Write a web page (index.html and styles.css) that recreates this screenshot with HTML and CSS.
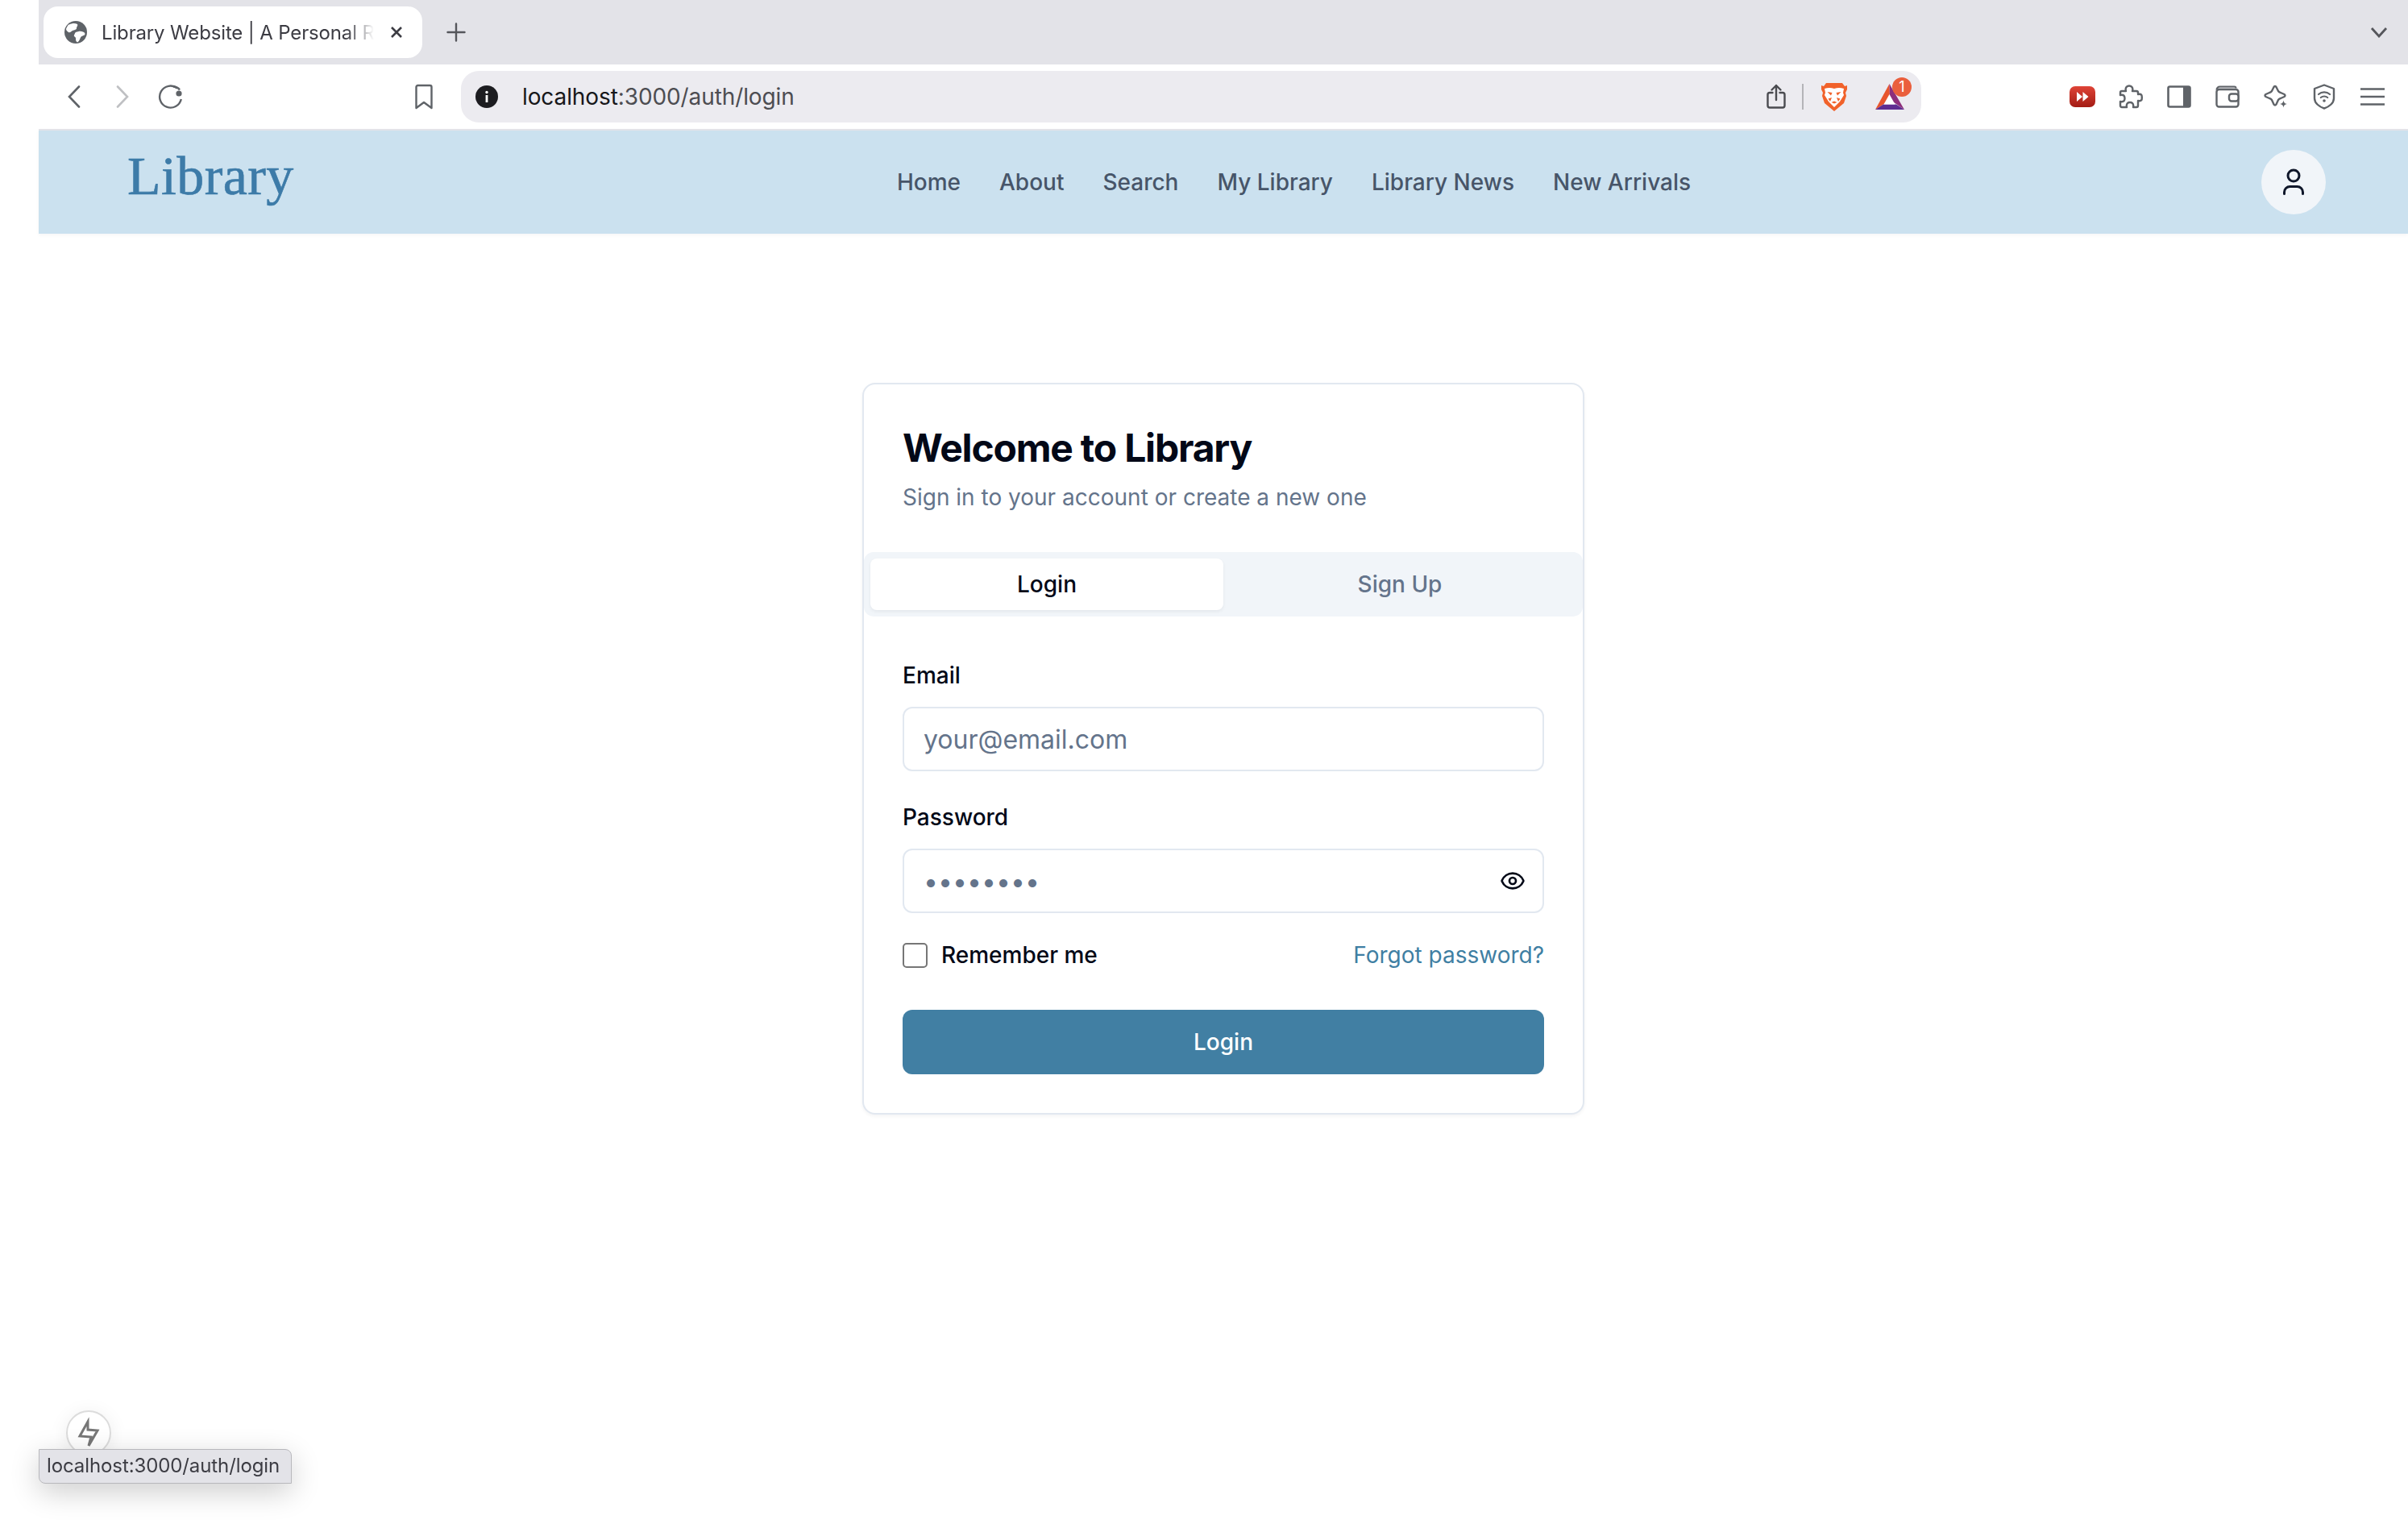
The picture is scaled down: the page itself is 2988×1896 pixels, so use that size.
FILE: index.html
```html
<!DOCTYPE html>
<html lang="en">
<head>
<meta charset="utf-8">
<title>Library Website | A Personal Reading Hub</title>
<link rel="stylesheet" href="styles.css">
</head>
<body>
<div class="shell">
  <div class="gutter"></div>
  <div class="window">
    <div class="tabbar">
      <div class="tab">
        <svg class="favicon" width="28" height="28" viewBox="0 0 28 28"><circle cx="14" cy="14" r="14" fill="#5f6368"/><path d="M6 4.500C9 3 13 2.500 16 4c1 2-1 3-1 5s-3 2-5 3-3 3-5 2-3-3-3-4 2-4 3-5.500Z" fill="#fff"/><path d="M14 14c3-1 6-2 9-.5 2.500 1 3 2 2 4-2 1-4 1-5 3s-2 5-4 6c-2-1-2-3-2-5s-3-2-2-4 1-3 2-3.500Z" fill="#fff"/></svg>
        <span class="tab-title">Library Website | A Personal Reading Hub</span>
        <svg class="tab-close" width="16" height="16" viewBox="0 0 16 16"><path d="M2 2 14 14M14 2 2 14" stroke="#3c3c43" stroke-width="2.600" fill="none"/></svg>
      </div>
      <svg class="newtab" width="24" height="24" viewBox="0 0 24 24"><path d="M12 1.500v21M1.500 12h21" stroke="#55565b" stroke-width="2.400" fill="none" stroke-linecap="round"/></svg>
      <svg class="tabs-menu" width="22" height="14" viewBox="0 0 22 14"><path d="M2 2l9 10 9-10" stroke="#55565b" stroke-width="2.800" fill="none"/></svg>
    </div>
    <div class="toolbar">
      <div class="nav-buttons">
        <span class="tool"><svg width="16" height="28" viewBox="0 0 16 28"><path d="M14 1.500 2 14l12 12.500" stroke="#5f6368" stroke-width="2.600" fill="none" stroke-linecap="round"/></svg></span>
        <span class="tool"><svg width="16" height="28" viewBox="0 0 16 28"><path d="M2 1.500 14 14 2 26.500" stroke="#bfc0c3" stroke-width="2.600" fill="none" stroke-linecap="round"/></svg></span>
        <span class="tool"><svg width="32" height="30" viewBox="0 0 32 30"><path d="M24 4.500A13.500 13.500 0 1 0 28.800 18" stroke="#5f6368" stroke-width="2.400" fill="none"/><circle cx="26" cy="11" r="3.600" fill="#5f6368"/><path d="M19 2.500c3 0 6 1 8 4" stroke="#5f6368" stroke-width="2.400" fill="none"/></svg></span>
      </div>
      <span class="tool bookmark"><svg width="24" height="32" viewBox="0 0 24 32"><path d="M2.500 4a2 2 0 0 1 2-2h15a2 2 0 0 1 2 2v26L12 23l-9.500 7Z" stroke="#5f6368" stroke-width="2.400" fill="none" stroke-linejoin="round"/></svg></span>
      <div class="address">
        <svg class="info" width="28" height="28" viewBox="0 0 28 28"><circle cx="14" cy="14" r="14" fill="#1c1c20"/><rect x="12.600" y="12" width="2.800" height="9" fill="#fff"/><circle cx="14" cy="8.500" r="1.700" fill="#fff"/></svg>
        <span class="url"><span class="host">localhost</span>:3000/auth/login</span>
        <svg class="share" width="24" height="32" viewBox="0 0 24 32"><path d="M7.500 11H4a2.500 2.500 0 0 0-2.500 2.500V27A2.500 2.500 0 0 0 4 29.500h16a2.500 2.500 0 0 0 2.500-2.500V13.500A2.500 2.500 0 0 0 20 11h-3.500M12 20V2M6.500 7.500 12 2l5.500 5.500" stroke="#4a4b50" stroke-width="2.400" fill="none" stroke-linecap="round" stroke-linejoin="round"/></svg>
        <span class="sep"></span>
        <svg class="lion" width="32" height="36" viewBox="0 0 32 36"><path d="M6 1H26L29 5 32 4V9L30 13 31 17 28 26 16 36 4 26 1 17 2 13 0 9V4L3 5Z" fill="#f1622b"/><path d="M4 8Q10 6 16 8 22 6 28 8L27 13 28 16 23 24 16 31 9 24 4 16 5 13Z" fill="#fff"/><path d="M7.500 12 13.500 13 12 16.500ZM24.500 12 18.500 13 20 16.500ZM13 19 11 24 8.500 20.500ZM19 19 21 24 23.500 20.500ZM12.500 25 16 23.500 19.500 25 16 26.500Z" fill="#f1622b"/></svg>
        <span class="bat">
          <svg width="38" height="34" viewBox="0 0 38 34"><path d="M18.500 1 19 21l-8 5.500L1 33Z" fill="#e8552d"/><path d="M18.500 1 37 33 27 26l-8-5Z" fill="#8d2f7c"/><path d="M1 33 11 26.500h16L37 33Z" fill="#5f2d91"/><path d="M18.500 14 25.500 26.500h-14Z" fill="#fff"/></svg>
          <span class="badge">1</span>
        </span>
      </div>
      <div class="extensions">
        <span class="tool"><svg width="32" height="26" viewBox="0 0 32 26"><defs><linearGradient id="red" x1="0" y1="0" x2="0" y2="1"><stop offset="0" stop-color="#df4437"/><stop offset="1" stop-color="#a31c14"/></linearGradient></defs><rect width="32" height="26" rx="7" fill="url(#red)"/><path d="M9 7l7 6-7 6ZM16.500 7l7 6-7 6Z" fill="#fff"/></svg></span>
        <span class="tool"><svg width="30" height="30" viewBox="0 0 30 30"><path d="M4 8H9C7.500 3 11 1.500 13 1.500S18.500 3 17 8H22Q24 8 24 10V12C29 11 28.800 14 28.800 16S29 21 24 20V26Q24 28 22 28H18C19 23 16 22 14 22S9 23 10 28H4Q2 28 2 26V21C7 22 7.500 19 7.500 17S7 12 2 13V10Q2 8 4 8Z" stroke="#5f6368" stroke-width="2.400" fill="none" stroke-linejoin="round"/></svg></span>
        <span class="tool"><svg width="30" height="28" viewBox="0 0 30 28"><rect x="1.500" y="1.500" width="27" height="25" rx="2" stroke="#5f6368" stroke-width="2.600" fill="none"/><rect x="20" y="1.500" width="8.500" height="25" fill="#5f6368"/></svg></span>
        <span class="tool"><svg width="30" height="28" viewBox="0 0 30 28"><path d="M1.500 5.500a4 4 0 0 1 4-4h18a2 2 0 0 1 2 2" stroke="#5f6368" stroke-width="2.200" fill="#d9d9dc"/><rect x="1.500" y="5" width="27" height="21.500" rx="3" stroke="#5f6368" stroke-width="2.400" fill="#fff"/><rect x="17" y="10.500" width="11.500" height="9" rx="3" fill="#fff" stroke="#5f6368" stroke-width="2.400"/></svg></span>
        <span class="tool"><svg width="30" height="30" viewBox="0 0 30 30"><path d="M12.500 3Q14 1 15.500 3L18 8Q19 9.500 21 10L25.500 12Q27.500 13.500 25.500 15L21 17Q19 17.500 18 19L15.500 24.500Q14 26.500 12.500 24.500L10 19Q9 17.500 7 17L2.500 15Q.5 13.500 2.500 12L7 10Q9 9.500 10 8Z" stroke="#5f6368" stroke-width="2.400" fill="#fff" stroke-linejoin="round"/><path d="M24.500 19.500c.6 3 1.500 4 4.500 4.500-3 .6-3.900 1.500-4.500 4.500-.6-3-1.500-3.900-4.500-4.500 3-.5 3.900-1.500 4.500-4.500Z" fill="#5f6368"/></svg></span>
        <span class="tool"><svg width="28" height="32" viewBox="0 0 28 32"><path d="M14 1.500 26 6v12c0 6-6 10.500-12 12.500C8 28.500 2 24 2 18V6Z" stroke="#5f6368" stroke-width="2.400" fill="none" stroke-linejoin="round"/><path d="M7 13c4-3.500 10-3.500 14 0M9.800 17c2.500-2 6-2 8.400 0" stroke="#5f6368" stroke-width="2.200" fill="none" stroke-linecap="round"/><circle cx="14" cy="21" r="1.800" fill="#5f6368"/></svg></span>
        <span class="tool"><svg width="30" height="22" viewBox="0 0 30 22"><path d="M0 1.500h30M0 11h30M0 20.500h30" stroke="#5f6368" stroke-width="2.400" fill="none"/></svg></span>
      </div>
    </div>
    <header class="site-header">
      <div class="logo-box"><a class="logo">Library</a></div>
      <nav class="site-nav">
        <a>Home</a><a>About</a><a>Search</a><a>My Library</a><a>Library News</a><a>New Arrivals</a>
      </nav>
      <button class="user-btn" type="button" aria-label="Account"><svg width="40" height="40" viewBox="0 0 40 40"><circle cx="20" cy="12" r="7" stroke="#0f172a" stroke-width="3" fill="none"/><path d="M8.500 34.500v-2a7 7 0 0 1 7-7h9a7 7 0 0 1 7 7v2" stroke="#0f172a" stroke-width="3" fill="none" stroke-linecap="round"/></svg></button>
    </header>
    <main class="main">
      <section class="card">
        <h1 class="card-title">Welcome to Library</h1>
        <p class="card-sub">Sign in to your account or create a new one</p>
        <div class="tabs">
          <button class="tab-btn active" type="button">Login</button>
          <button class="tab-btn" type="button">Sign Up</button>
        </div>
        <form class="form">
          <label class="field-label" for="email">Email</label>
          <input class="input" id="email" type="email" placeholder="your@email.com">
          <label class="field-label second" for="password">Password</label>
          <div class="password-wrap">
            <input class="input" id="password" type="password" placeholder="••••••••">
            <svg class="eye" width="32" height="32" viewBox="0 0 24 24"><path d="M2.060 12.350a1 1 0 0 1 0-.700 10.750 10.750 0 0 1 19.880 0 1 1 0 0 1 0 .700 10.750 10.750 0 0 1-19.880 0" stroke="#020817" stroke-width="2" fill="none"/><circle cx="12" cy="12" r="3" stroke="#020817" stroke-width="2" fill="none"/></svg>
          </div>
          <div class="form-row">
            <label class="remember"><input class="check" type="checkbox"><span>Remember me</span></label>
            <a class="forgot">Forgot password?</a>
          </div>
          <button class="submit" type="button">Login</button>
        </form>
      </section>
    </main>
  </div>
</div>
<div class="dev-badge"><svg width="56" height="56" viewBox="0 0 56 56"><path d="M27 14 17 32l14 1-3 11 11-19-12-1Z" stroke="#777" stroke-width="3" fill="none" stroke-linejoin="miter"/></svg></div>
<div class="status-tip">localhost:3000/auth/login</div>
</body>
</html>
```
FILE: styles.css
```css
* { box-sizing: border-box; }
html, body { margin: 0; height: 100%; background: #fff; overflow: hidden; }
body { font-family: "Inter", "Liberation Sans", sans-serif; color: #020817; }
a { text-decoration: none; }
svg { display: block; flex: none; }

.shell { display: flex; height: 1896px; }
.gutter { width: 48px; flex: none; background: #fff; }
.window { flex: 1; min-width: 0; display: flex; flex-direction: column; }

.tabbar { height: 80px; flex: none; background: #e3e3e8; display: flex; align-items: center; padding: 0 25px 0 6px; }
.tab { width: 470px; height: 64px; background: #fff; border-radius: 18px; display: flex; align-items: center; padding-left: 26px; }
.tab-title { width: 338px; margin-left: 18px; font-size: 24px; letter-spacing: -0.15px; color: #3c3c43; white-space: nowrap; overflow: hidden; -webkit-mask-image: linear-gradient(90deg, #000 90%, transparent 100%); mask-image: linear-gradient(90deg, #000 90%, transparent 100%); }
.tab-close { margin-left: 20px; }
.newtab { margin-left: 30px; }
.tabs-menu { margin-left: auto; }

.toolbar { height: 80px; flex: none; background: #fff; display: flex; align-items: center; padding: 0 14px; }
.nav-buttons, .extensions { display: flex; }
.extensions { margin-left: auto; }
.tool { width: 60px; height: 60px; flex: none; display: flex; align-items: center; justify-content: center; }
.bookmark { margin-left: 254px; }
.address { width: 1812px; height: 64px; margin-left: 16px; background: #ecebf0; border-radius: 22px; display: flex; align-items: center; padding-left: 18px; }
.url { margin-left: 30px; font-size: 28px; letter-spacing: -0.1px; color: #4d4d52; white-space: nowrap; }
.host { color: #17171a; }
.share { margin-left: auto; }
.sep { width: 2px; height: 32px; background: #b4b4b8; margin-left: 20px; }
.lion { margin-left: 22px; }
.bat { position: relative; margin: 0 20px 0 34px; }
.badge { position: absolute; left: 22px; top: -7px; width: 24px; height: 24px; border-radius: 12px; background: #ea5f3d; color: #fff; font-size: 18px; line-height: 24px; text-align: center; }

.site-header { height: 130px; flex: none; border-top: 2px solid #e3e3e8; background: #cbe1ef; display: flex; align-items: center; justify-content: space-between; padding: 0 102px 0 110px; box-shadow: 0 2px 4px rgba(15, 23, 42, 0.04); }
.logo-box { width: 247px; padding-bottom: 16px; }
.logo { font-family: "Liberation Serif", serif; font-size: 68px; font-weight: 400; letter-spacing: 0.4px; -webkit-text-stroke: 0.6px #3d7ba8; line-height: 80px; color: #3d7ba8; display: block; }
.site-nav { display: flex; gap: 48px; }
.site-nav a { font-size: 28px; font-weight: 500; color: #475569; line-height: 40px; white-space: nowrap; }
.user-btn { width: 80px; height: 80px; padding: 0; border: 0; border-radius: 50%; background: #f1f5f9; display: flex; align-items: center; justify-content: center; }

.main { flex: 1; display: flex; justify-content: center; align-items: flex-start; padding-top: 185px; }
.card { width: 896px; background: #fff; border: 2px solid #e2e8f0; border-radius: 16px; box-shadow: 0 2px 4px rgba(15, 23, 42, 0.05); padding-top: 49px; }
.card-title { margin: 0; padding: 0 48px; font-size: 48px; line-height: 60px; font-weight: 700; letter-spacing: -1.2px; color: #020817; }
.card-sub { margin: 11px 0 0; padding: 0 48px; font-size: 28px; line-height: 40px; color: #64748b; }
.tabs { margin-top: 48px; height: 80px; background: #f1f5f9; border-radius: 12px; padding: 8px; display: grid; grid-template-columns: 1fr 1fr; }
.tab-btn { border: 0; background: transparent; border-radius: 8px; font: 500 28px "Inter", sans-serif; color: #64748b; padding: 0; }
.tab-btn.active { background: #fff; color: #020817; box-shadow: 0 2px 4px rgba(15, 23, 42, 0.06); }
.form { padding: 53px 48px 48px; display: flex; flex-direction: column; }
.field-label { font-size: 28px; line-height: 40px; font-weight: 500; color: #020817; margin-bottom: 19px; }
.field-label.second { margin-top: 37px; margin-bottom: 19px; }
.input { width: 100%; height: 80px; border: 2px solid #e2e8f0; border-radius: 12px; padding: 0 24px; font: 400 32px "Inter", sans-serif; background: #fff; color: #020817; outline: none; }
.input::placeholder { color: #64748b; opacity: 1; }
.password-wrap { position: relative; }
.eye { position: absolute; right: 23px; top: 24px; }
.form-row { display: flex; align-items: center; justify-content: space-between; margin-top: 32px; }
.remember { display: flex; align-items: center; gap: 17px; font-size: 28px; line-height: 40px; font-weight: 500; color: #020817; }
.check { appearance: none; -webkit-appearance: none; width: 31px; height: 31px; margin: 0; border: 2px solid #767676; border-radius: 5px; background: #fff; }
.forgot { font-size: 28px; line-height: 40px; color: #3f7fa3; }
.submit { margin-top: 48px; height: 80px; border: 0; border-radius: 12px; background: #417fa3; color: #fff; font: 500 28px "Inter", sans-serif; padding: 0; }

.dev-badge { position: fixed; left: 82px; top: 1750px; width: 56px; height: 56px; border-radius: 50%; background: #fff; border: 2px solid #dcdcdc; display: flex; align-items: center; justify-content: center; box-shadow: 0 4px 24px rgba(0, 0, 0, 0.08); }
.dev-badge svg { flex: none; margin: -2px; }
.status-tip { position: fixed; left: 48px; top: 1798px; width: 314px; height: 43px; background: #e3e3e8; border: 1px solid #b8b8bc; border-radius: 0 8px 0 8px; font-size: 24px; letter-spacing: -0.1px; line-height: 40px; color: #3c3c43; padding-left: 9px; white-space: nowrap; box-shadow: 0 10px 36px rgba(0, 0, 0, 0.2); }
```
